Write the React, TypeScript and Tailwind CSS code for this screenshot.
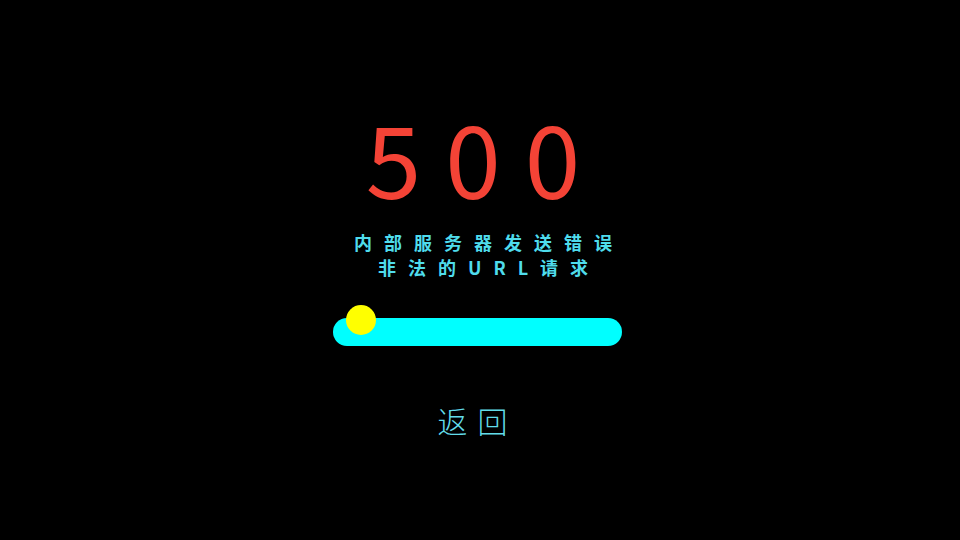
export default function App() {
  return (
    <div
      className="min-h-screen w-full bg-black flex flex-col items-center pt-[106px]"
      style={{ fontFamily: '"Noto Sans CJK SC", "Noto Sans", sans-serif' }}
    >
      <h1 className="text-[100px] leading-none font-normal text-[#f44336] tracking-[24px] pl-[10px] h-[100px]">
        500
      </h1>
      <div className="mt-[24px] text-[18px] leading-[25px] font-bold text-[#4fdcec] tracking-[12px] pl-[18px] text-center">
        <p>内部服务器发送错误</p>
        <p>非法的URL请求</p>
      </div>
      <div className="relative mt-[38px] mr-[5px] w-[289px] h-[28px] rounded-full bg-[#00ffff]">
        <span className="absolute left-[13px] top-[-13px] w-[30px] h-[30px] rounded-full bg-[#ffff00]" />
      </div>
      <button className="mt-[59px] mr-[15px] text-[30px] leading-none text-[#62dcea] tracking-[10px] pl-[10px] font-light">
        返回
      </button>
    </div>
  );
}
